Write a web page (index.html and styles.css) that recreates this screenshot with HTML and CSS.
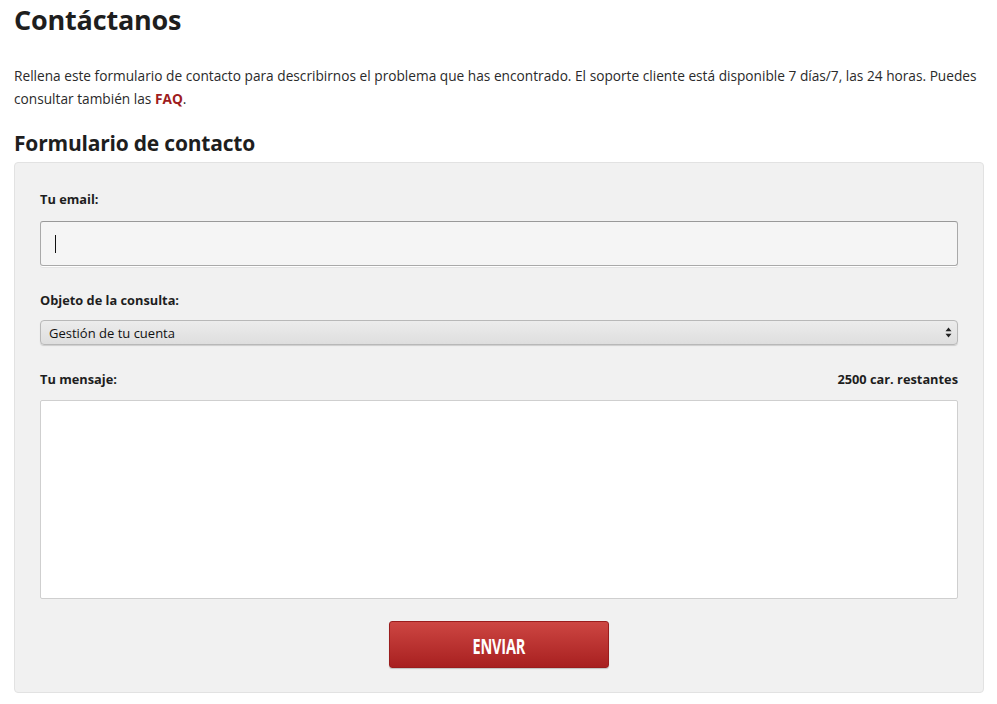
FILE: index.html
```html
<!DOCTYPE html>
<html lang="es">
<head>
    <meta charset="UTF-8">
    <title>Contáctanos</title>
    <link rel="stylesheet" href="styles.css">
</head>
<body>
    <h1>Contáctanos</h1>
    <p class="intro">Rellena este formulario de contacto para describirnos el problema que has encontrado. El soporte cliente está disponible 7 días/7, las 24 horas. Puedes consultar también las <a href="#">FAQ</a>.</p>

    <h2>Formulario de contacto</h2>
    <form class="contact-form">
        <label class="field-label" for="email">Tu email:</label>
        <div class="email-input"><span class="caret"></span></div>

        <label class="field-label" for="subject">Objeto de la consulta:</label>
        <div class="select-box">
            <span>Gestión de tu cuenta</span>
            <svg width="7" height="11" viewBox="0 0 7 11"><path d="M3.5 0.5 L6.5 4.2 L0.5 4.2 Z M3.5 10.5 L6.5 6.8 L0.5 6.8 Z" fill="#222"/></svg>
        </div>

        <div class="message-head">
            <label class="field-label" for="message">Tu mensaje:</label>
            <span class="counter">2500 car. restantes</span>
        </div>
        <div class="message-box"></div>

        <div class="actions">
            <button type="button" class="send-btn"><span>ENVIAR</span></button>
        </div>
    </form>
</body>
</html>
```

FILE: styles.css
```css
* {
    box-sizing: border-box;
}

body {
    margin: 0;
    padding: 0 14px;
    background-color: #fff;
    color: #222;
    font-family: 'Open Sans', 'Noto Sans', sans-serif;
}

h1 {
    margin: 0;
    padding-top: 2px;
    font-size: 27px;
    line-height: 36px;
    font-weight: 700;
    color: #1e1e1e;
    letter-spacing: -0.2px;
}

.intro {
    margin: 26px 0 0;
    font-size: 13.7px;
    line-height: 23px;
    color: #2a2a2a;
}

.intro a {
    color: #9e1c20;
    font-weight: 700;
    text-decoration: none;
}

h2 {
    margin: 19px 0 0;
    font-size: 21px;
    line-height: 28px;
    font-weight: 700;
    color: #1e1e1e;
    letter-spacing: -0.2px;
}

.contact-form {
    margin-top: 5px;
    width: 970px;
    background-color: #f1f1f1;
    border: 1px solid #e2e2e2;
    border-radius: 4px;
    padding: 27px 25px 24px 25px;
}

.field-label {
    display: block;
    font-size: 12.8px;
    font-weight: 700;
    line-height: 18px;
    color: #1e1e1e;
}

.email-input {
    margin-top: 13px;
    height: 45px;
    background-color: #f5f5f5;
    border: 1px solid #a9a9a9;
    border-top-color: #999;
    border-radius: 3px;
    box-shadow: 0 1px 0 #fff, 0 2px 0 #e4e4e4;
    display: flex;
    align-items: center;
    padding-left: 14px;
    margin-bottom: 25px;
}

.caret {
    display: block;
    width: 1px;
    height: 18px;
    background-color: #111;
}

.select-box {
    margin-top: 11px;
    height: 25px;
    border: 1px solid #b8b8b8;
    border-radius: 4px;
    background: linear-gradient(#ececec, #dedede);
    box-shadow: 0 1px 1px rgba(0, 0, 0, 0.15);
    display: flex;
    align-items: center;
    justify-content: space-between;
    padding: 0 5px 0 8px;
    font-size: 13px;
    color: #111;
    margin-bottom: 25px;
}

.message-head {
    display: flex;
    justify-content: space-between;
    align-items: center;
}

.counter {
    font-size: 12.8px;
    font-weight: 700;
    color: #1e1e1e;
}

.message-box {
    margin-top: 12px;
    height: 199px;
    background-color: #fff;
    border: 1px solid #cfcfcf;
    border-radius: 2px;
}

.actions {
    display: flex;
    justify-content: center;
    margin-top: 22px;
}

.send-btn {
    width: 220px;
    height: 47px;
    border: 1px solid #9a1d1d;
    border-radius: 3px;
    background: linear-gradient(#cd4642, #a82020);
    color: #fff;
    font-family: 'Open Sans', sans-serif;
    font-weight: 700;
    font-size: 22px;
    cursor: pointer;
    box-shadow: 0 1px 1px rgba(0, 0, 0, 0.2);
    display: flex;
    align-items: center;
    justify-content: center;
}

.send-btn span {
    display: inline-block;
    transform: scaleX(0.66);
    letter-spacing: -0.3px;
}
```
